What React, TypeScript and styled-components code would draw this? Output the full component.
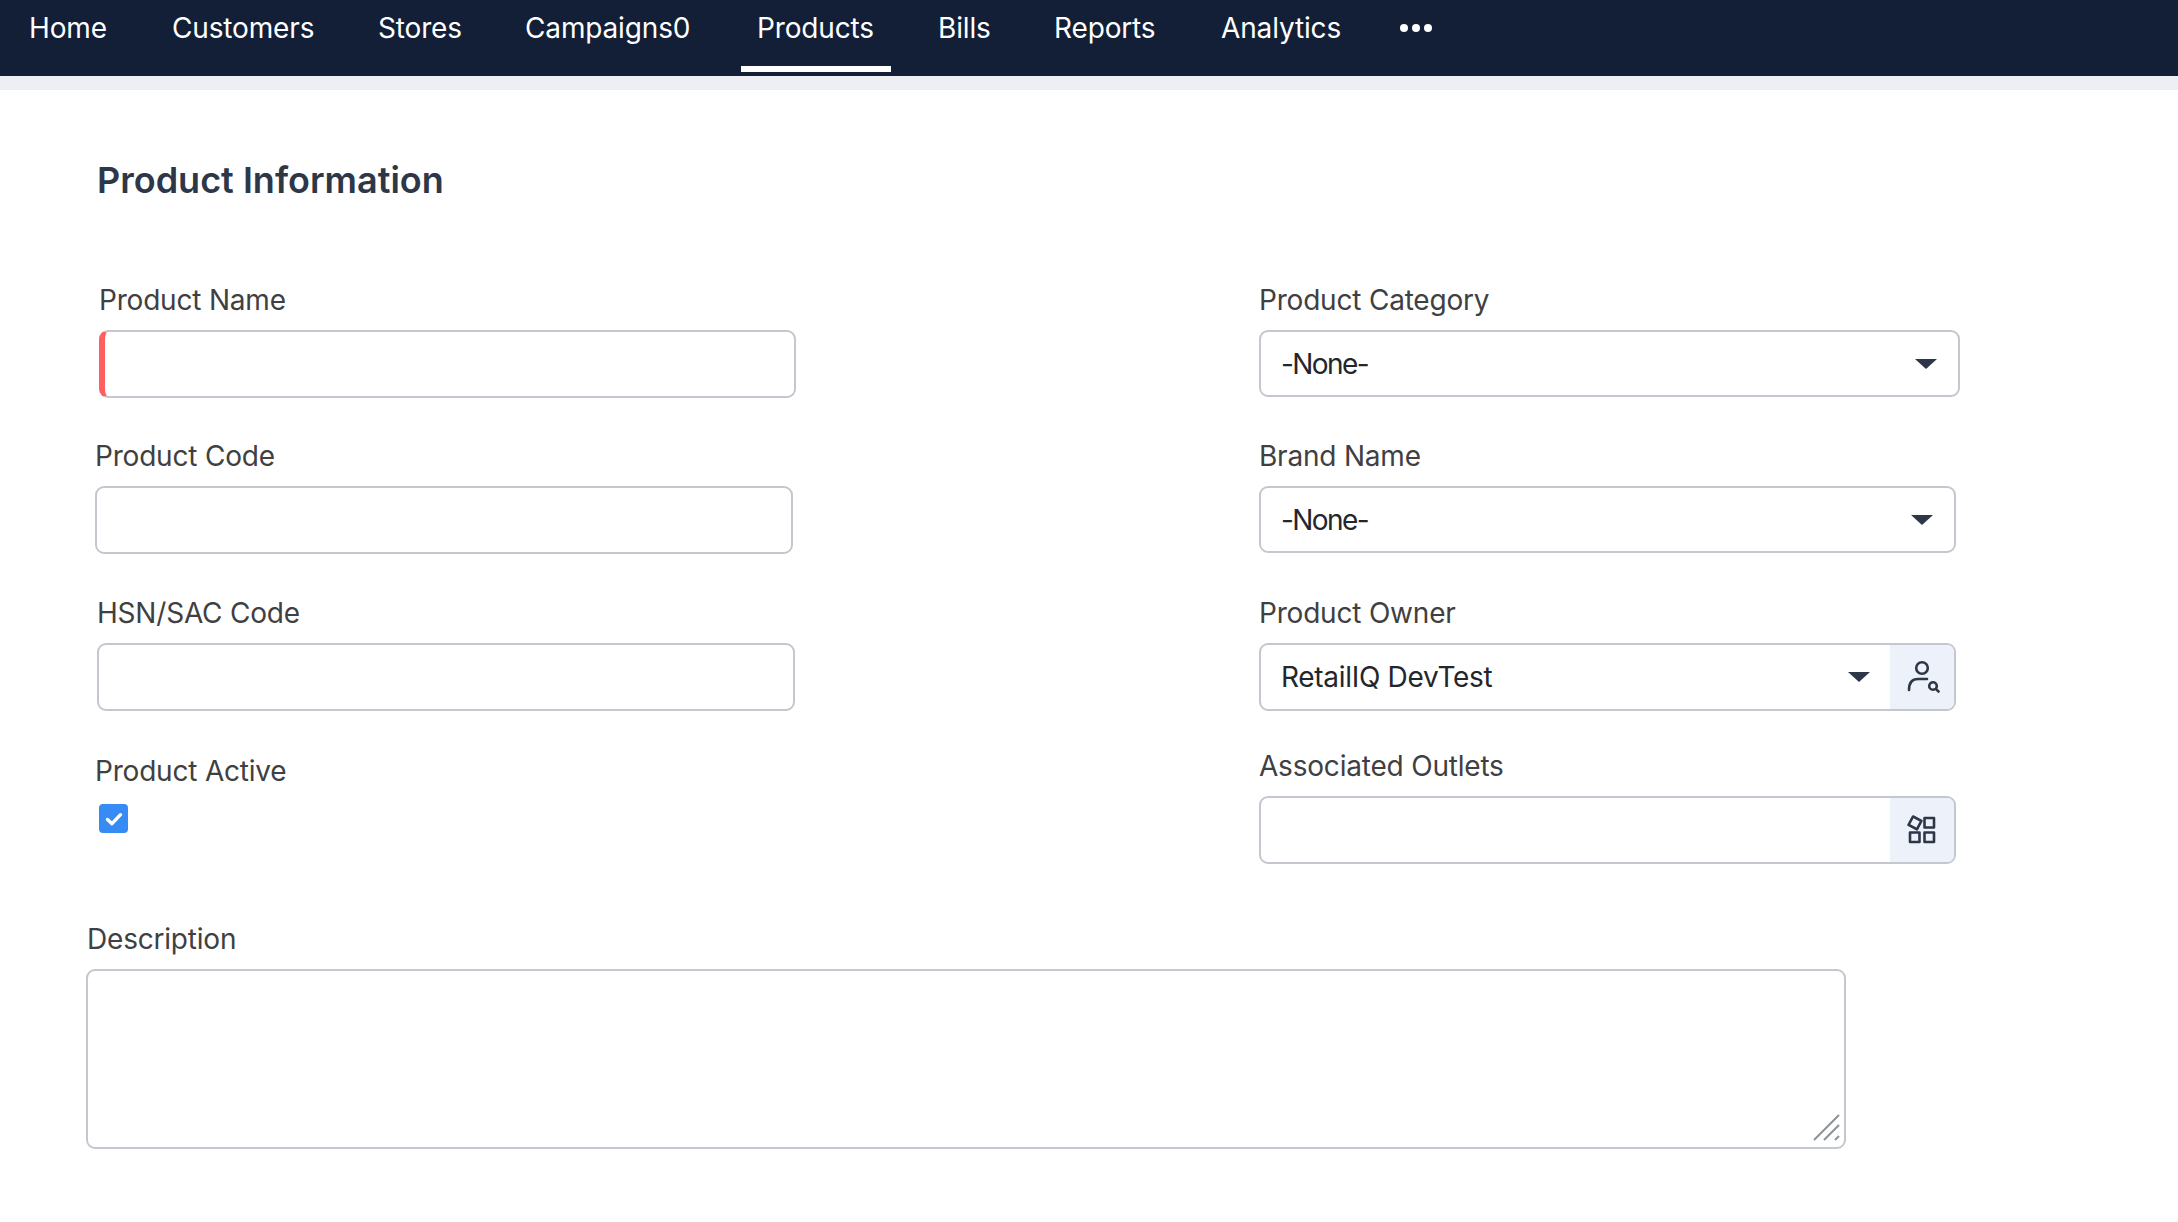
import styled, { createGlobalStyle } from 'styled-components';

const GlobalStyle = createGlobalStyle`
	html, body {
		margin: 0;
		padding: 0;
		background: #ffffff;
		font-family: 'Inter', 'Liberation Sans', sans-serif;
	}
	* {
		box-sizing: border-box;
	}
`;

const NAV_ITEMS = [
	{ label: 'Home', width: 143 },
	{ label: 'Customers', width: 206 },
	{ label: 'Stores', width: 147 },
	{ label: 'Campaigns0', width: 232 },
	{ label: 'Products', width: 181, active: true },
	{ label: 'Bills', width: 116 },
	{ label: 'Reports', width: 167 },
	{ label: 'Analytics', width: 179 }
];

const Page = styled.div`
	width: 2178px;
	height: 1222px;
	overflow: hidden;
	background: #ffffff;
`;

const NavBar = styled.nav`
	height: 76px;
	background: #121f36;
	display: flex;
	padding-left: 29px;
`;

const NavItem = styled.a<{ $width: number; $active?: boolean }>`
	position: relative;
	width: ${props => props.$width}px;
	height: 56px;
	display: flex;
	align-items: center;
	color: #ffffff;
	font-size: 28px;
	letter-spacing: -0.15px;
	white-space: nowrap;
	&::after {
		content: '';
		display: ${props => (props.$active ? 'block' : 'none')};
		position: absolute;
		left: -16px;
		top: 66px;
		width: 150px;
		height: 6px;
		background: #ffffff;
	}
`;

const MoreDots = styled.div`
	height: 56px;
	display: flex;
	align-items: center;
	gap: 4px;
`;

const Dot = styled.span`
	width: 8px;
	height: 8px;
	border-radius: 50%;
	background: #ffffff;
`;

const Band = styled.div`
	height: 14px;
	background: #edeff4;
`;

const Content = styled.main`
	padding-top: 65px;
`;

const Title = styled.h1`
	margin: 0 0 75px 97px;
	height: 50px;
	line-height: 50px;
	font-size: 36px;
	font-weight: 600;
	letter-spacing: 0;
	color: #2e3748;
`;

const Columns = styled.div`
	display: flex;
	align-items: flex-start;
`;

const Column = styled.div<{ $width: number }>`
	width: ${props => props.$width}px;
	display: flex;
	flex-direction: column;
`;

const Field = styled.div<{ $left: number; $width: number; $bottom?: number }>`
	margin-left: ${props => props.$left}px;
	width: ${props => props.$width}px;
	margin-bottom: ${props => props.$bottom ?? 38}px;
`;

const Label = styled.label<{ $shift?: number }>`
	display: block;
	height: 40px;
	line-height: 40px;
	margin: 0 0 10px ${props => props.$shift ?? 0}px;
	font-size: 28px;
	letter-spacing: -0.2px;
	color: #3f4042;
	white-space: nowrap;
`;

const InputBox = styled.div<{ $height?: number; $required?: boolean }>`
	position: relative;
	display: flex;
	align-items: center;
	height: ${props => props.$height ?? 68}px;
	border: 2px solid #c3c7ce;
	border-radius: 9px;
	background: #ffffff;
	overflow: hidden;
	border-left: ${props => (props.$required ? '6px solid #ff5f5f' : '2px solid #c3c7ce')};
`;

const Value = styled.span<{ $tight?: boolean }>`
	flex: 1;
	padding-left: 20px;
	font-size: 28px;
	letter-spacing: ${props => (props.$tight ? '-1.6px' : '-0.3px')};
	color: #23262b;
	white-space: nowrap;
`;

const Caret = styled.span<{ $right: number }>`
	width: 0;
	height: 0;
	margin-right: ${props => props.$right}px;
	border-left: 11px solid transparent;
	border-right: 11px solid transparent;
	border-top: 10px solid #2e3748;
`;

const AddOn = styled.div`
	width: 64px;
	height: 100%;
	background: #edf1f9;
	display: flex;
	align-items: center;
	justify-content: center;
`;

const CheckBox = styled.div`
	width: 29px;
	height: 29px;
	margin: 13px 0 0 4px;
	border-radius: 4px;
	background: #368bf5;
	display: flex;
	align-items: center;
	justify-content: center;
`;

const ResizeHandle = styled.svg`
	position: absolute;
	right: 4px;
	bottom: 5px;
`;

const DescriptionField = styled.div`
	margin: 55px 0 0 86px;
	width: 1760px;
`;

const PersonSearchIcon = () => (
	<svg width='36' height='34' viewBox='0 0 36 34' fill='none' stroke='#2e3748' strokeWidth='2.6' strokeLinecap='round'>
		<circle cx='18' cy='8' r='5.8' />
		<path d='M5 30c0-7 3-11 9-11h9' />
		<circle cx='29' cy='26' r='3.8' />
		<path d='M31.8 28.8l2.7 2.7' />
	</svg>
);

const ModulesIcon = () => (
	<svg width='30' height='30' viewBox='0 0 30 30' fill='none' stroke='#2e3748' strokeWidth='2.6' strokeLinejoin='round'>
		<rect x='3.2' y='3.2' width='9.5' height='9.5' transform='rotate(28 8 8)' />
		<rect x='17.5' y='3' width='9.5' height='9.5' />
		<rect x='3' y='17.5' width='9.5' height='9.5' />
		<rect x='17.5' y='17.5' width='9.5' height='9.5' />
	</svg>
);

const CheckIcon = () => (
	<svg width='20' height='20' viewBox='0 0 20 20' fill='none' stroke='#ffffff' strokeWidth='3.4' strokeLinecap='round' strokeLinejoin='round'>
		<path d='M3.5 10.5l4.5 4.2 8.5-9' />
	</svg>
);

const ResizeIcon = () => (
	<ResizeHandle width='28' height='28' viewBox='0 0 28 28' stroke='#8f929a' strokeWidth='2'>
		<path d='M2 26L27 1M12 26L27 11M23 26l4-4' />
	</ResizeHandle>
);

export default function App() {
	return (
		<Page>
			<GlobalStyle />
			<NavBar>
				{NAV_ITEMS.map(item => (
					<NavItem key={item.label} $width={item.width} $active={item.active}>
						{item.label}
					</NavItem>
				))}
				<MoreDots>
					<Dot />
					<Dot />
					<Dot />
				</MoreDots>
			</NavBar>
			<Band />
			<Content>
				<Title>Product Information</Title>
				<Columns>
					<Column $width={1259}>
						<Field $left={99} $width={697}>
							<Label>Product Name</Label>
							<InputBox $required />
						</Field>
						<Field $left={95} $width={698} $bottom={39}>
							<Label>Product Code</Label>
							<InputBox />
						</Field>
						<Field $left={97} $width={698} $bottom={40}>
							<Label>HSN/SAC Code</Label>
							<InputBox />
						</Field>
						<Field $left={95} $width={300} $bottom={0}>
							<Label>Product Active</Label>
							<CheckBox>
								<CheckIcon />
							</CheckBox>
						</Field>
					</Column>
					<Column $width={701}>
						<Field $left={0} $width={701} $bottom={39}>
							<Label>Product Category</Label>
							<InputBox $height={67}>
								<Value $tight>-None-</Value>
								<Caret $right={21} />
							</InputBox>
						</Field>
						<Field $left={0} $width={697} $bottom={40}>
							<Label>Brand Name</Label>
							<InputBox $height={67}>
								<Value $tight>-None-</Value>
								<Caret $right={21} />
							</InputBox>
						</Field>
						<Field $left={0} $width={697} $bottom={35}>
							<Label>Product Owner</Label>
							<InputBox>
								<Value>RetailIQ DevTest</Value>
								<Caret $right={20} />
								<AddOn>
									<PersonSearchIcon />
								</AddOn>
							</InputBox>
						</Field>
						<Field $left={0} $width={697} $bottom={0}>
							<Label>Associated Outlets</Label>
							<InputBox>
								<Value />
								<AddOn>
									<ModulesIcon />
								</AddOn>
							</InputBox>
						</Field>
					</Column>
				</Columns>
				<DescriptionField>
					<Label $shift={1}>Description</Label>
					<InputBox $height={180}>
						<ResizeIcon />
					</InputBox>
				</DescriptionField>
			</Content>
		</Page>
	);
}
